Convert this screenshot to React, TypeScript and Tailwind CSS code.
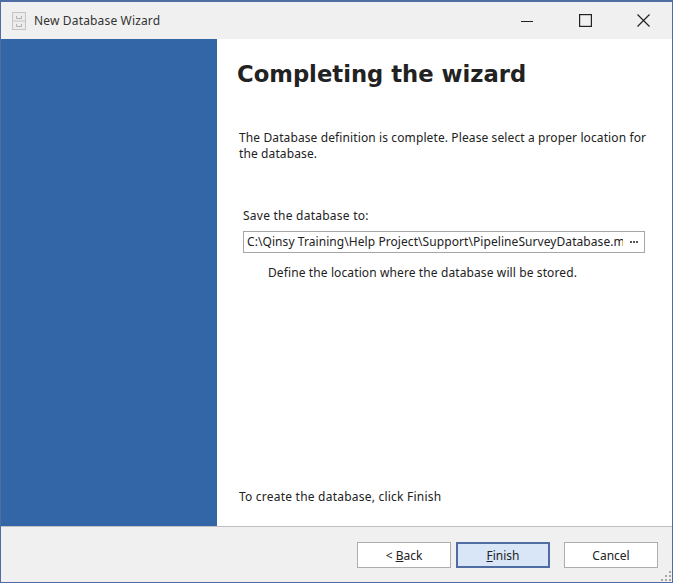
function WizardIcon() {
  return (
    <svg width="14" height="18" viewBox="0 0 14 18" fill="none" stroke="#c4c4c4" strokeWidth="1">
      <rect x="0.5" y="0.5" width="13" height="17" fill="#ececec" />
      <path d="M0.5 9H13.5" />
      <path d="M4.5 4V6.5H9.5V4" stroke="#b0b0b0" />
      <path d="M4.5 12V14.5H9.5V12" stroke="#b0b0b0" />
    </svg>
  );
}

function Grip() {
  return (
    <svg width="12" height="12" viewBox="0 0 12 12" fill="#a8a8a8" className="absolute bottom-0 right-0">
      <rect x="9" y="1" width="2" height="2" />
      <rect x="5" y="5" width="2" height="2" />
      <rect x="9" y="5" width="2" height="2" />
      <rect x="1" y="9" width="2" height="2" />
      <rect x="5" y="9" width="2" height="2" />
      <rect x="9" y="9" width="2" height="2" />
    </svg>
  );
}

export default function App() {
  return (
    <div className="relative flex h-[583px] w-[673px] flex-col overflow-hidden border border-t-2 border-[#4f6da3] bg-[#f0f0f0] font-['Noto_Sans','DejaVu_Sans',sans-serif] text-[12px] text-[#222]">
      <header className="flex h-[37px] shrink-0 items-center pl-[11px]">
        <WizardIcon />
        <span className="ml-[8px] text-[12px] tracking-[0.16px] text-[#333]">New Database Wizard</span>
        <div className="ml-auto flex items-center">
          <svg width="12" height="12" viewBox="0 0 12 12" stroke="#222" strokeWidth="1" className="mr-[46px]">
            <path d="M0 6.5H12" />
          </svg>
          <svg width="13" height="13" viewBox="0 0 13 13" fill="none" stroke="#222" strokeWidth="1.2" className="mr-[45px]">
            <rect x="0.6" y="0.6" width="11.8" height="11.8" />
          </svg>
          <svg width="13" height="13" viewBox="0 0 13 13" fill="none" stroke="#222" strokeWidth="1.2" className="mr-[22px]">
            <path d="M0.5 0.5L12.5 12.5M12.5 0.5L0.5 12.5" />
          </svg>
        </div>
      </header>

      <div className="flex min-h-0 flex-1">
        <aside className="w-[216px] shrink-0 bg-[#3366a6]" />
        <main className="flex min-w-0 flex-1 flex-col bg-white pl-[22px] pr-[25px]">
          <h1 className="mt-[19px] -ml-[2px] font-['DejaVu_Sans',sans-serif] text-[22.7px] leading-[32px] font-bold text-[#222]">
            Completing the wizard
          </h1>
          <p className="mt-[40px] text-[12px] leading-[16px] tracking-[0.11px]">
            The Database definition is complete. Please select a proper location for the database.
          </p>
          <label className="mt-[45px] ml-[4px] leading-[17px] tracking-[0.24px]">Save the database to:</label>
          <div className="mt-[7px] ml-[4px] mr-[2px] flex h-[22px] items-center border border-[#a6a6a6] pl-[3px]">
            <span className="min-w-0 flex-1 overflow-hidden tracking-[0.07px] whitespace-nowrap">
              C:\Qinsy Training\Help Project\Support\PipelineSurveyDatabase.mdb
            </span>
            <span className="flex w-[21px] shrink-0 items-center justify-center gap-px">
              <i className="size-[2px] bg-[#555]" />
              <i className="size-[2px] bg-[#555]" />
              <i className="size-[2px] bg-[#555]" />
            </span>
          </div>
          <p className="mt-[11px] ml-[29px] leading-[17px] tracking-[0.11px]">
            Define the location where the database will be stored.
          </p>
          <p className="mt-auto mb-[21px] leading-[17px] tracking-[0.22px]">To create the database, click Finish</p>
        </main>
      </div>

      <footer className="flex h-[56px] shrink-0 items-center justify-end border-t border-[#c0c0c0] pt-[1px] pr-[14px]">
        <button className="h-[26px] w-[94px] border border-[#adadad] bg-white pt-[1px]">
          &lt; <u>B</u>ack
        </button>
        <button className="ml-[5px] h-[26px] w-[94px] border-2 border-[#4f6da3] bg-[#d9e6f8] pt-[1px]">
          <u>F</u>inish
        </button>
        <button className="ml-[14px] h-[26px] w-[94px] border border-[#adadad] bg-white pt-[1px]">Cancel</button>
      </footer>
      <Grip />
    </div>
  );
}
